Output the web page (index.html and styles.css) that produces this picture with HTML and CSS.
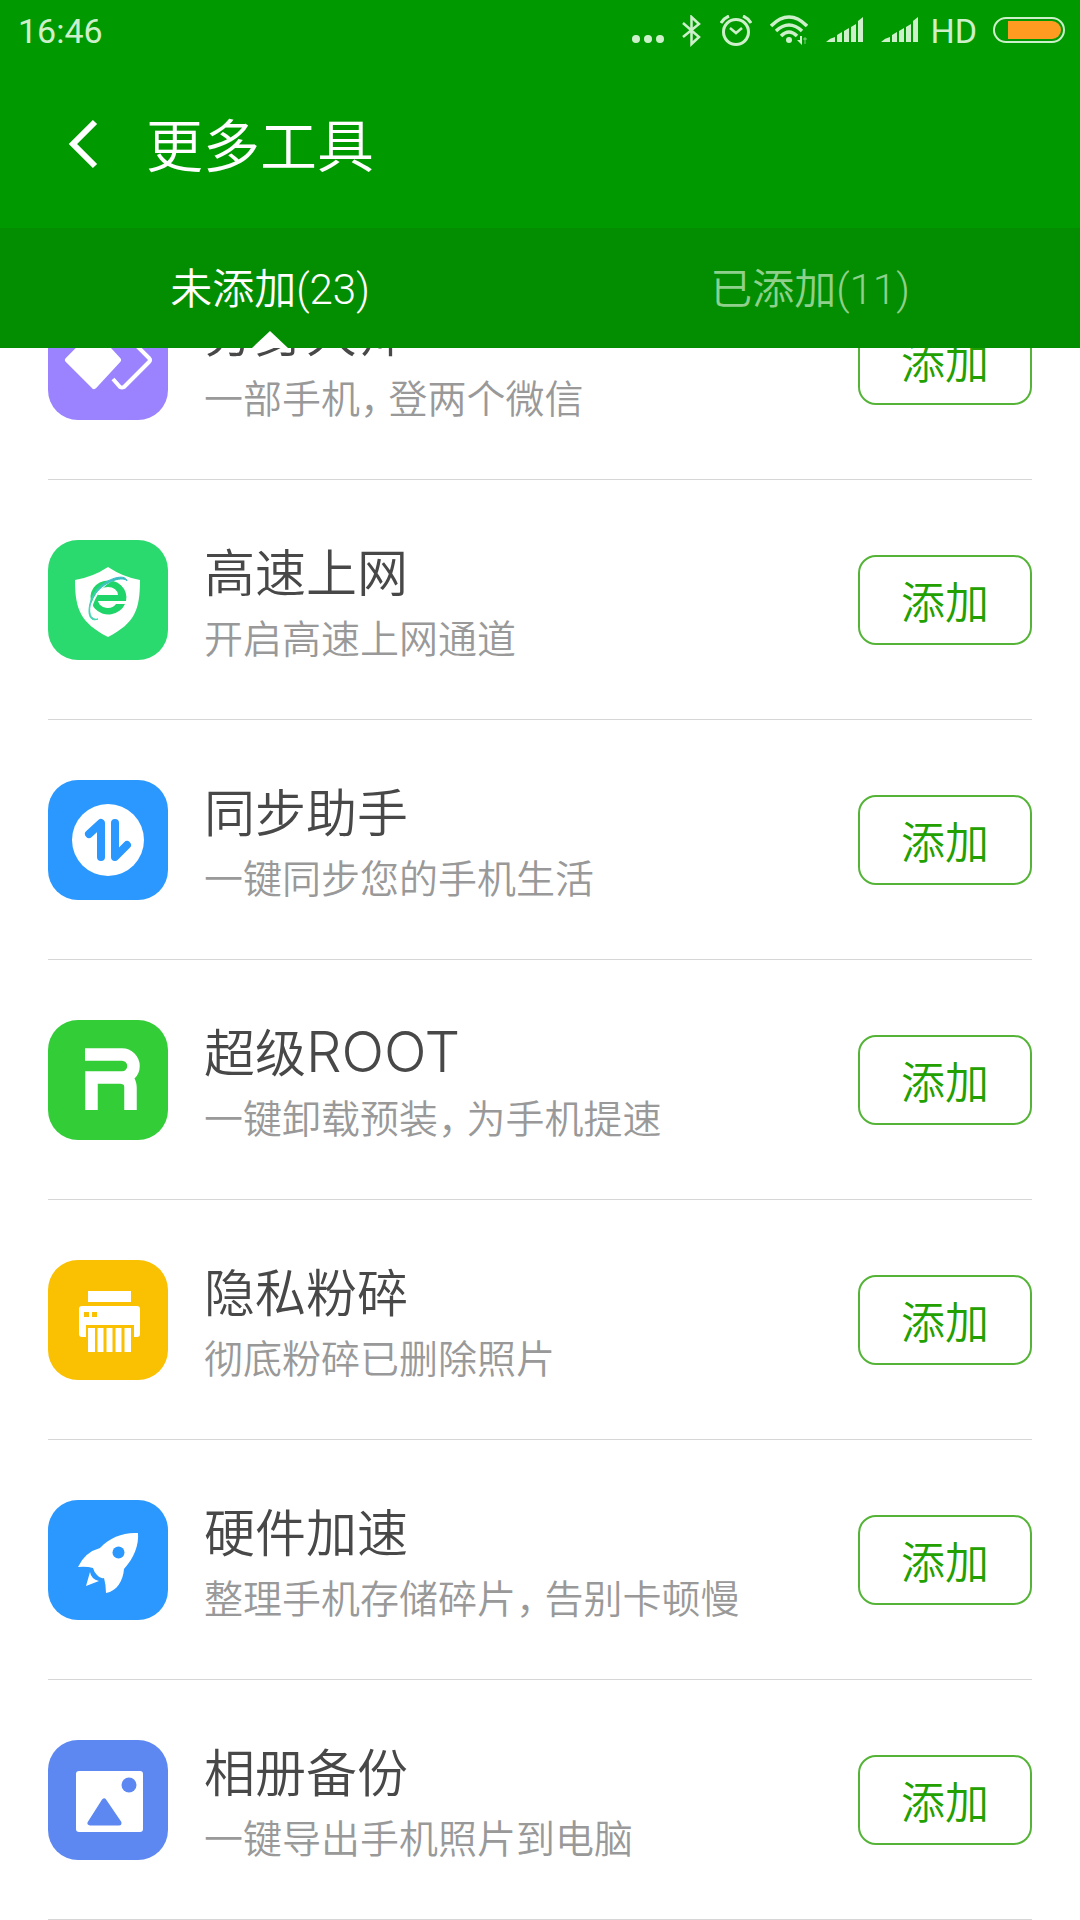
FILE: index.html
```html
<!DOCTYPE html>
<html lang="zh-CN">
<head>
<meta charset="utf-8">
<meta name="viewport" content="width=device-width, initial-scale=1">
<title>更多工具</title>
<link rel="stylesheet" href="styles.css">
</head>
<body>
<header class="top">
  <div class="status">
    <span>16:46</span>
    <div class="status-right">
      <div class="status-icons">
        <svg width="32" height="32" viewBox="0 0 32 32" fill="currentColor"><circle cx="4" cy="24" r="4"/><circle cx="16" cy="24" r="4"/><circle cx="28" cy="24" r="4"/></svg>
        <svg width="20" height="32" viewBox="0 0 20 32" fill="none" stroke="currentColor" stroke-width="2.5"><path d="M1 8l16 14-7.500 7V2L17 9 1 22"/></svg>
        <svg width="32" height="32" viewBox="0 0 32 32" fill="none" stroke="currentColor" stroke-width="3"><circle cx="16" cy="17" r="12.500"/><path d="M10 13l6 5 6-5" stroke-width="2.500"/><path d="M1 8Q4 3 9 1M31 8Q28 3 23 1"/></svg>
        <svg width="38" height="32" viewBox="0 2 38 32" fill="none" stroke="currentColor" stroke-width="3.500"><path d="M1 13Q19-5 37 13M6 18Q19 6 32 18M11 23Q19 15 27 23"/><circle cx="19" cy="27" r="3" fill="currentColor" stroke="none"/><path d="M27 27h3v-4h2v9l-5-5z" fill="currentColor" stroke="none"/><path d="M35 24v7M33 26h4" stroke-width="1" opacity=".6"/></svg>
        <svg width="37" height="32" viewBox="0 3 37 32" fill="currentColor"><path d="M0 30q4-4 9-5v5zM11 23l5-3v10h-5zM18 19l5-3v14h-5zM25 15l5-3v18h-5zM32 9l5-4v25h-5z"/></svg>
        <svg width="37" height="32" viewBox="0 3 37 32" fill="currentColor"><path d="M0 30q4-4 9-5v5zM11 23l5-3v10h-5zM18 19l5-3v14h-5zM25 15l5-3v18h-5zM32 9l5-4v25h-5z"/></svg>
      </div>
      <span>HD</span>
      <svg class="battery" width="72" height="32" viewBox="0 0 72 32"><rect x="1" y="3" width="70" height="24" rx="12" fill="none" stroke="currentColor" stroke-width="2"/><path d="M15 6h44a9 9 0 0 1 0 18H15z" fill="#ff9b20"/></svg>
    </div>
  </div>
  <div class="title-bar">
    <button class="back" aria-label="返回"><svg width="30" height="52" viewBox="0 0 30 52" fill="none" stroke="#fff" stroke-width="6"><path d="M27 4L5 26l22 22"/></svg></button>
    <h1 class="title">更多工具</h1>
  </div>
  <div class="tabs" role="tablist">
    <button class="tab tab-active" role="tab" aria-selected="true">未添加(23)</button>
    <button class="tab" role="tab" aria-selected="false">已添加(11)</button>
  </div>
</header>
<main class="list-view">
  <ul class="list">
    <li class="item">
      <svg class="icon icon-purple" viewBox="0 0 120 120"><path d="M46 34L70 60 46 86 20 60z" fill="#fff" stroke="#fff" stroke-width="6" stroke-linejoin="round"/><path d="M65 79l7 8q2 1 4 0l25-25q2-2 0-4L76 33q-2-1-4 0l-7 8" fill="none" stroke="#fff" stroke-width="4"/></svg>
      <div class="info"><h2 class="name">分身大师</h2><p class="desc">一部手机<span class="comma">，</span>登两个微信</p></div>
      <button class="add">添加</button>
    </li>
    <li class="item">
      <svg class="icon icon-mint" viewBox="0 0 120 120"><defs><linearGradient id="ring" x1="0" y1="1" x2="1" y2="0"><stop offset="0" stop-color="#41d6b0"/><stop offset="1" stop-color="#35b8c4"/></linearGradient></defs><path d="M60 27Q75 37 92 40C92 70 87 83 60 97C33 83 27 70 27 40Q45 37 60 27z" fill="#fff"/><path d="M78 61H50a10 9 0 0 0 18 3h9A18 17 0 1 1 78 61zM50 55h20a10 8 0 0 0-20 0z" fill="#1fd468" fill-rule="evenodd"/><path d="M79 43C78 34 60 37 49 54 40 68 42 82 53 78" fill="none" stroke="#fff" stroke-width="2"/><path d="M79 41C76 36 58 40 47 54 39 66 40 81 50 79 38 84 39 64 47 52 57 38 78 33 79 41z" fill="url(#ring)" stroke="url(#ring)"/></svg>
      <div class="info"><h2 class="name">高速上网</h2><p class="desc">开启高速上网通道</p></div>
      <button class="add">添加</button>
    </li>
    <li class="item">
      <svg class="icon icon-blue" viewBox="0 0 120 120"><circle cx="60" cy="60" r="36" fill="#fff"/><path d="M41 54l12-11v34M67 43v34l12-12" fill="none" stroke="#2a98ff" stroke-width="8" stroke-linecap="round" stroke-linejoin="round"/></svg>
      <div class="info"><h2 class="name">同步助手</h2><p class="desc">一键同步您的手机生活</p></div>
      <button class="add">添加</button>
    </li>
    <li class="item">
      <svg class="icon icon-green" viewBox="0 0 120 120"><path d="M37 34.500H74a11.500 11.500 0 0 1 0 23H43.500V90M73 57.500q9.500 1 9.500 10V90" fill="none" stroke="#fff" stroke-width="12.500"/></svg>
      <div class="info"><h2 class="name">超级<span class="latin">ROOT</span></h2><p class="desc">一键卸载预装<span class="comma">，</span>为手机提速</p></div>
      <button class="add">添加</button>
    </li>
    <li class="item">
      <svg class="icon icon-yellow" viewBox="0 0 120 120"><path d="M40 31h43v11H40zM34 46h55q3 0 3 3v25q0 3-3 3h-3V65H38v12h-4q-3 0-3-3V49q0-3 3-3zM36 52v5h5v-5zM44 52v5h5v-5z" fill="#fff" fill-rule="evenodd"/><path d="M40 68h7v24h-7zM49.500 68h6v24h-6zM58.500 68h6v24h-6zM67.500 68h6v24h-6zM76.500 68h6.500v24h-6.500z" fill="#fff"/></svg>
      <div class="info"><h2 class="name">隐私粉碎</h2><p class="desc">彻底粉碎已删除照片</p></div>
      <button class="add">添加</button>
    </li>
    <li class="item">
      <svg class="icon icon-blue" viewBox="0 0 120 120"><path d="M90 33C91 45 86 58 76 69 75 81 69 91 58 93Q58 85 56 78 52 79 49 75 46 72 45 68 38 66 30 67 37 52 52 48C62 37 76 32 90 33z" fill="#fff"/><circle cx="70.500" cy="52.500" r="6" fill="#2a98ff"/><path d="M42 72l-4 14 13-5q-8-2-9-9z" fill="#fff"/></svg>
      <div class="info"><h2 class="name">硬件加速</h2><p class="desc">整理手机存储碎片<span class="comma">，</span>告别卡顿慢</p></div>
      <button class="add">添加</button>
    </li>
    <li class="item">
      <svg class="icon icon-indigo" viewBox="0 0 120 120"><rect x="28" y="31" width="67" height="61" rx="3" fill="#fff"/><circle cx="81" cy="45" r="7.500" fill="#5d88f2"/><path d="M56 61L42 83h29z" fill="#5d88f2" stroke="#5d88f2" stroke-width="5" stroke-linejoin="round"/></svg>
      <div class="info"><h2 class="name">相册备份</h2><p class="desc">一键导出手机照片到电脑</p></div>
      <button class="add">添加</button>
    </li>
  </ul>
</main>
</body>
</html>
```
FILE: styles.css
```css
* {
  box-sizing: border-box;
  margin: 0;
  padding: 0;
}

body {
  background: #fff;
  color: #484848;
  font-family: "Noto Sans CJK SC", sans-serif;
  font-weight: 350;
}

button {
  border: 0;
  background: none;
  color: inherit;
  font: inherit;
  cursor: pointer;
}

svg {
  display: block;
  flex: none;
}

/* Header */
.top {
  position: relative;
  z-index: 1;
  background: #009a00;
  color: #fff;
}

.status {
  display: flex;
  justify-content: space-between;
  align-items: center;
  height: 60px;
  padding: 2px 15px 0 18px;
  color: #cdf0cb;
  font-family: Roboto, sans-serif;
  font-size: 34px;
  font-weight: 400;
}

.status-right {
  display: flex;
  align-items: center;
  gap: 12px;
}

.status-icons {
  display: flex;
  gap: 18px;
}

.battery {
  margin-left: 4px;
}

.title-bar {
  display: flex;
  align-items: center;
  gap: 48px;
  height: 168px;
  padding: 0 68px;
}

.title {
  padding-bottom: 4px;
  font-size: 57px;
  font-weight: 350;
}

.tabs {
  display: flex;
  height: 120px;
  background: #028e00;
}

.tab {
  position: relative;
  flex: 1;
  padding-top: 4px;
  color: #8fd08c;
  font-family: Roboto, "Noto Sans CJK SC", sans-serif;
  font-size: 42px;
  line-height: 48px;
}

.tab-active {
  color: #fff;
}

.tab-active::after {
  content: "";
  position: absolute;
  bottom: 0;
  left: 50%;
  margin-left: -18px;
  border: 18px solid transparent;
  border-top: 0;
  border-bottom: 17px solid #fff;
}

/* The list is scrolled partly under the header */
.list-view {
  overflow: hidden;
}

.list {
  margin-top: -108px;
  padding: 0 48px;
  list-style: none;
}

.item {
  display: flex;
  align-items: center;
  gap: 36px;
  height: 240px;
  padding-top: 1px;
  border-bottom: 1px solid #d6d6d6;
}

.icon {
  width: 120px;
  height: 120px;
  border-radius: 30px;
}

.icon-purple { background: #9b82ff; }
.icon-mint { background: #2bda6e; }
.icon-blue { background: #2a98ff; }
.icon-green { background: #33cd38; }
.icon-yellow { background: #fac002; }
.icon-indigo { background: #5d88f2; }

.info {
  flex: 1;
  padding-bottom: 4px;
}

.name {
  font-size: 51px;
  font-weight: 350;
  line-height: 76px;
}

.latin {
  font-family: Inter, sans-serif;
  font-size: 56px;
  font-weight: 300;
  line-height: 1;
}

.desc {
  color: #999;
  font-size: 39px;
  line-height: 56px;
}

/* Half-width punctuation with some air after it */
.comma {
  margin-right: 9px;
  font-feature-settings: "halt";
}

.add {
  width: 174px;
  height: 90px;
  border: 2px solid #55b438;
  border-radius: 18px;
  color: #22a000;
  font-size: 44px;
}
```
